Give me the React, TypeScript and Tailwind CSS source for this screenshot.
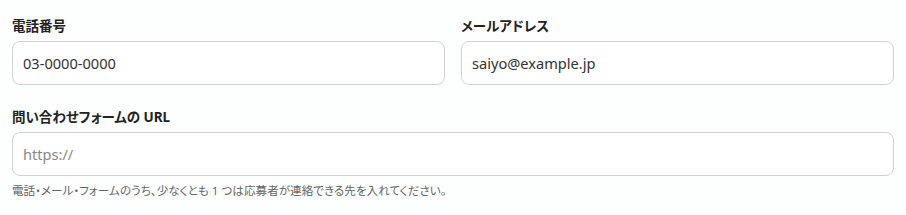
import React, { useState } from 'react';

const font = "font-['Noto_Sans','Noto_Sans_CJK_JP',sans-serif] [font-feature-settings:'palt']";

interface FieldProps {
  label: string;
  value: string;
  placeholder?: string;
  onChange: (v: string) => void;
}

const Field: React.FC<FieldProps> = ({ label, value, placeholder, onChange }) => (
  <label className="flex flex-col">
    <span className="text-[13.5px] leading-5 font-bold text-[#222] mb-[5px]">{label}</span>
    <input
      type="text"
      value={value}
      placeholder={placeholder}
      onChange={(e) => onChange(e.target.value)}
      className="h-[44px] w-full rounded-[8px] border border-[#d2d2d2] bg-white px-[10px] text-[14.6px] text-[#333] placeholder:text-[#888] outline-none"
    />
  </label>
);

export default function App() {
  const [tel, setTel] = useState('03-0000-0000');
  const [mail, setMail] = useState('saiyo@example.jp');
  const [url, setUrl] = useState('');

  return (
    <div className={`${font} bg-[#fdfefe] px-3 pt-4 pb-4 w-[906px] h-[215px]`}>
      <div className="grid grid-cols-2 gap-4">
        <Field label="電話番号" value={tel} onChange={setTel} />
        <Field label="メールアドレス" value={mail} onChange={setMail} />
      </div>
      <div className="mt-[22px]">
        <Field label="問い合わせフォームの URL" value={url} placeholder="https://" onChange={setUrl} />
        <p className="mt-[7px] text-[11.6px] leading-4 text-[#666]">
          電話・メール・フォームのうち、少なくとも 1 つは応募者が連絡できる先を入れてください。
        </p>
      </div>
    </div>
  );
}
